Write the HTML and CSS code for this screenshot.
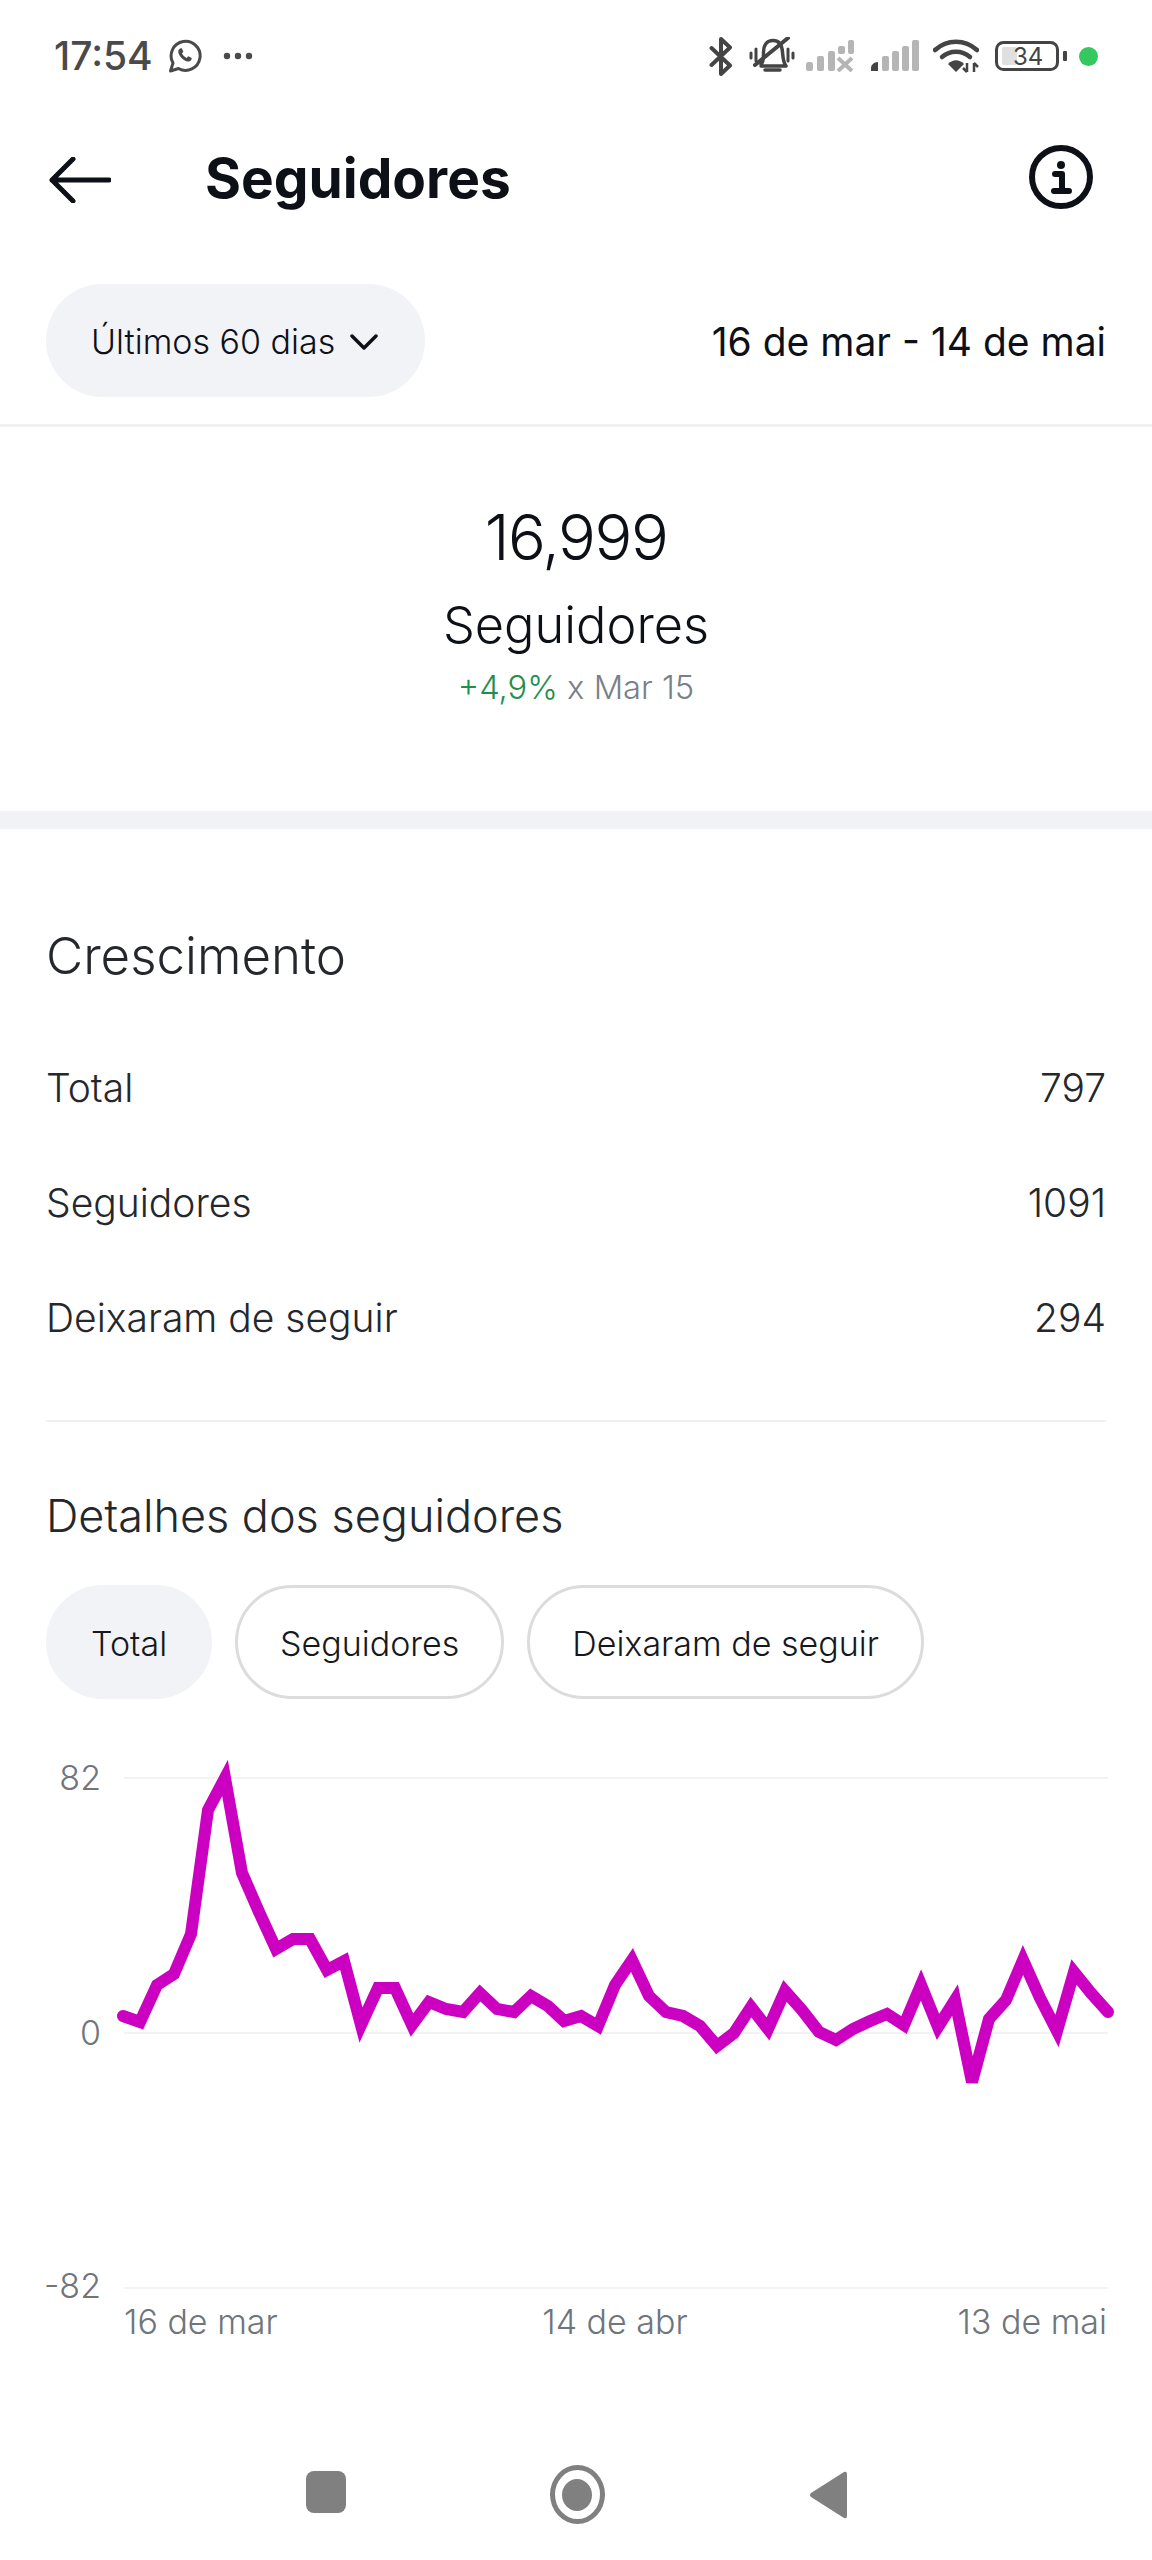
FILE: index.html
```html
<!DOCTYPE html>
<html lang="pt">
<head>
<meta charset="utf-8">
<title>Seguidores</title>
<link rel="stylesheet" href="styles.css">
</head>
<body>
<div class="page">
  <div class="status">
    <span class="time">17:54</span>
    <svg class="ic-wa" viewBox="0 0 34 34"><path d="M2.5 32 L5 24 A14.5 14.5 0 1 1 10.5 29.5 Z" fill="none" stroke="#4a4a4a" stroke-width="3" stroke-linejoin="round"/><path d="M12 9.5c-1.6 1-2.2 2.8-1.3 5.2 1.4 3.4 4.3 6.3 7.6 7.5 2.3.8 4.200.2 5.200-1.700l.2-1.500-3.500-1.700-1.600 1.600c-2-.8-3.800-2.600-4.600-4.600l1.400-1.500-1.600-3.500z" fill="#4a4a4a"/></svg>
    <svg class="ic-dots" viewBox="0 0 30 8"><circle cx="4" cy="4" r="3.200"/><circle cx="15" cy="4" r="3.200"/><circle cx="26" cy="4" r="3.200"/></svg>
    <div class="status-right">
      <svg class="ic-bt" viewBox="0 0 24 39"><path d="M2.500 11 L21 28.500 L12 37 V2 L21 10.500 L2.500 28" fill="none" stroke="#444" stroke-width="4" stroke-linecap="round" stroke-linejoin="round"/></svg>
      <svg class="ic-bell" viewBox="0 0 46 38"><g fill="none" stroke="#444" stroke-linecap="round" stroke-linejoin="round"><path d="M12 27 C15 25 14.500 20 14.500 15 C14.500 8 18 3.500 24 3.500 C31 3.500 33 9 33.500 15 C34 20 34 25 37 29 H12" stroke-width="3.500"/><path d="M6 28 L39 1" stroke-width="4"/><path d="M16 33 H31" stroke-width="3.500"/><path d="M2 16 V21 M7 12 V24 M39 12 V24 M44 16 V21" stroke-width="3"/></g></svg>
      <svg class="ic-sig" viewBox="0 0 48 32" fill="#b5b5b5"><rect x="0" y="22" width="7" height="9" rx="2.500"/><rect x="11" y="16" width="7" height="15" rx="2"/><rect x="22" y="11" width="7" height="20" rx="2"/><rect x="32" y="6" width="7" height="8" rx="2"/><rect x="42" y="0" width="6" height="14" rx="2"/><path d="M32 18 L46 31 M46 18 L32 31" stroke="#b5b5b5" stroke-width="4" fill="none"/></svg>
      <svg class="ic-sig" viewBox="0 0 48 32" fill="#b5b5b5"><path d="M0 31 V28 C0 25 3 22 7 22 V31 Z" fill="#444"/><rect x="11" y="16" width="7" height="15" rx="2"/><rect x="21" y="11" width="7" height="20" rx="2"/><rect x="31" y="6" width="7" height="25" rx="2"/><rect x="41" y="0" width="7" height="31" rx="2"/></svg>
      <svg class="ic-wifi" viewBox="0 0 46 34"><g fill="none" stroke="#444" stroke-width="4.500" stroke-linecap="round"><path d="M2 11 C14 0 32 0 44 11"/><path d="M9 18 C17 11 29 11 37 18"/></g><path d="M15 25 C20 20 26 20 31 25 L23 33 Z" fill="#444"/><path d="M34 24 V33 M30 29 L34 33 M41 33 V24 M41 24 L45 28" fill="none" stroke="#444" stroke-width="2.500"/></svg>
      <svg class="ic-bat" viewBox="0 0 72 30"><rect x="1.500" y="1.500" width="61" height="27" rx="7" fill="none" stroke="#444" stroke-width="3"/><rect x="7" y="6" width="15" height="18" rx="2" fill="#e0e0e0"/><rect x="68" y="10" width="4" height="10" rx="1" fill="#444"/><text class="bat-text" x="18" y="24">34</text></svg>
      <span class="live-dot"></span>
    </div>
  </div>

  <div class="header">
    <svg class="ic-back" viewBox="0 0 62 46"><path d="M60 23 H3 M24 2 L3 23 L24 44" fill="none" stroke="#0d1117" stroke-width="5" stroke-linecap="round" stroke-linejoin="round"/></svg>
    <h1 class="title">Seguidores</h1>
    <svg class="ic-info" viewBox="0 0 64 64"><circle cx="32" cy="32" r="29" fill="none" stroke="#0d1117" stroke-width="6"/><circle cx="32" cy="20" r="4" fill="#0d1117"/><path d="M26 29 H33 V45 M25 46 H40" fill="none" stroke="#0d1117" stroke-width="6" stroke-linecap="round" stroke-linejoin="round"/></svg>
  </div>

  <div class="filter-row">
    <div class="pill">Últimos 60 dias
      <svg class="ic-chev" viewBox="0 0 28 16"><path d="M2 2 L14 14 L26 2" fill="none" stroke="#0d1117" stroke-width="3.500" stroke-linecap="round" stroke-linejoin="round"/></svg>
    </div>
    <div class="range">16 de mar - 14 de mai</div>
  </div>

  <div class="stats">
    <div class="big">16,999</div>
    <div class="big-label">Seguidores</div>
    <div class="compare"><span class="up">+4,9%</span> x Mar 15</div>
  </div>

  <div class="band"></div>

  <div class="section">
    <h2 class="h-growth">Crescimento</h2>
    <div class="rows">
      <div class="row"><span>Total</span><span>797</span></div>
      <div class="row"><span>Seguidores</span><span>1091</span></div>
      <div class="row"><span>Deixaram de seguir</span><span>294</span></div>
    </div>
    <div class="rule"></div>
    <h3 class="h-details">Detalhes dos seguidores</h3>
    <div class="chips">
      <div class="chip chip-on">Total</div>
      <div class="chip">Seguidores</div>
      <div class="chip">Deixaram de seguir</div>
    </div>
  </div>

  <svg class="chart" viewBox="0 1740 1152 620">
    <g class="grid">
      <path d="M124 1778 H1108"/>
      <path d="M124 2033 H1108"/>
      <path d="M124 2288 H1108"/>
    </g>
    <g class="axis">
      <text class="end" x="101" y="1790">82</text>
      <text class="end" x="101" y="2045">0</text>
      <text class="end" x="101" y="2298">-82</text>
      <text x="124" y="2334">16 de mar</text>
      <text class="mid" x="615" y="2334">14 de abr</text>
      <text class="end" x="1107" y="2334">13 de mai</text>
    </g>
    <polyline class="line" points="123,2016 140,2022 157,1985 174,1974 191,1934 208,1810 225,1778 242,1873 259,1912 276,1949 293,1939 310,1939 327,1970 344,1961 361,2025 378,1988 395,1988 412,2025 429,2002 446,2009 463,2012 480,1993 497,2009 514,2012 531,1996 548,2006 564,2021 581,2016 598,2026 615,1985 632,1960 649,1996 666,2012 683,2016 700,2026 717,2046 734,2033 751,2007 768,2029 785,1991 802,2010 819,2032 836,2040 853,2029 870,2021 887,2014 904,2025 921,1985 938,2027 955,2000 972,2082 989,2019 1006,2000 1023,1960 1040,1998 1057,2031 1074,1972 1091,1993 1108,2012"/>
  </svg>

  <div class="nav">
    <span class="nav-square"></span>
    <span class="nav-circle"><span class="nav-core"></span></span>
    <svg class="nav-back" viewBox="0 0 38 50"><path d="M35 2 Q38 1 38 4 V46 Q38 49 35 48 L2 27 Q0 25 2 23 Z" fill="#808080"/></svg>
  </div>
</div>
</body>
</html>
```

FILE: styles.css
```css
* { box-sizing: border-box; }
html, body { margin: 0; padding: 0; background: #fff; }
body { font-family: Inter, "Noto Sans", "Liberation Sans", sans-serif; color: #16181c; }
.page { width: 1152px; height: 2560px; overflow: hidden; display: flex; flex-direction: column; }

.status { height: 112px; display: flex; align-items: center; padding: 0 54px; color: #4a4a4a; }
.time { font-size: 39px; font-weight: 500; line-height: 50px; width: 114px; }
.ic-wa { width: 34px; height: 34px; }
.ic-dots { width: 30px; height: 8px; margin-left: 21px; fill: #4a4a4a; }
.status-right { margin-left: auto; display: flex; align-items: center; }
.ic-bt { width: 24px; height: 39px; }
.ic-bell { width: 46px; height: 38px; margin-left: 16px; }
.ic-sig { width: 48px; height: 32px; margin-left: 11px; }
.ic-sig + .ic-sig { margin-left: 17px; }
.ic-wifi { width: 46px; height: 34px; margin-left: 14px; }
.ic-bat { width: 72px; height: 30px; margin-left: 16px; }
.bat-text { font-size: 24px; fill: #444; font-family: Inter, sans-serif; }
.live-dot { width: 19px; height: 19px; border-radius: 50%; background: #34c85f; margin-left: 12px; }

.header { height: 130px; display: flex; align-items: center; padding: 0 59px 0 49px; }
.ic-back { width: 62px; height: 46px; margin-top: 6px; }
.title { margin: 2px 0 0 94px; font-size: 55px; line-height: 60px; font-weight: 700; color: #0d1117; }
.ic-info { width: 64px; height: 64px; margin-left: auto; }

.filter-row { height: 185px; padding: 42px 46px 0; display: flex; justify-content: space-between; align-items: flex-start; border-bottom: 3px solid #f0f1f3; }
.pill { width: 379px; height: 113px; border-radius: 57px; background: #f2f3f6; display: flex; align-items: center; padding: 2px 0 0 45px; font-size: 34px; font-weight: 350; color: #0d1117; gap: 15px; }
.ic-chev { width: 28px; height: 16px; }
.range { height: 113px; display: flex; align-items: center; padding-top: 2px; font-size: 39px; color: #0d1117; }

.stats { height: 384px; padding-top: 70px; text-align: center; }
.big { font-size: 63px; line-height: 80px; font-weight: 350; letter-spacing: -1.5px; color: #0d1117; }
.big-label { font-size: 50.5px; line-height: 60px; margin-top: 18px; font-weight: 350; color: #0d1117; }
.compare { font-size: 32.7px; line-height: 44px; margin-top: 10px; font-weight: 350; color: #7a8087; }
.up { color: #1f8f4e; }

.band { height: 18px; background: #f1f2f5; }

.section { padding: 92px 46px 0; }
.h-growth { margin: 0; font-size: 51px; line-height: 70px; font-weight: 350; color: #24272b; }
.rows { margin-top: 39px; }
.row { height: 115px; display: flex; justify-content: space-between; align-items: center; font-size: 39px; font-weight: 350; color: #24272b; }
.rule { height: 2px; margin-top: 45px; background: #eff0f2; }
.h-details { margin: 64px 0 0; font-size: 45px; line-height: 60px; font-weight: 350; color: #24272b; }
.chips { margin-top: 39px; display: flex; gap: 23px; }
.chip { height: 114px; padding: 2px 42px 0; border-radius: 57px; border: 3px solid #dcdcdc; display: flex; align-items: center; font-size: 34px; font-weight: 350; color: #16181c; }
.chip-on { background: #f2f3f6; border-color: #f2f3f6; }

.chart { display: block; width: 1152px; height: 620px; margin-top: 41px; flex: none; }
.grid path { stroke: #f3f3f5; stroke-width: 2; fill: none; }
.axis text { font-size: 34px; font-weight: 350; fill: #6f757c; font-family: Inter, sans-serif; }
.axis .end { text-anchor: end; }
.axis .mid { text-anchor: middle; }
.line { fill: none; stroke: #cc00c0; stroke-width: 12; stroke-linejoin: miter; stroke-miterlimit: 3.5; stroke-linecap: round; }

.nav { flex: none; height: 200px; padding-top: 105px; display: flex; justify-content: center; align-items: flex-start; gap: 204px; }
.nav-square { width: 40px; height: 42px; margin-top: 6px; border-radius: 8px; background: #808080; }
.nav-circle { width: 55px; height: 59px; border-radius: 50%; border: 5px solid #808080; display: flex; align-items: center; justify-content: center; }
.nav-core { width: 30px; height: 32px; border-radius: 50%; background: #808080; }
.nav-back { width: 38px; height: 50px; margin-top: 5px; }
```
